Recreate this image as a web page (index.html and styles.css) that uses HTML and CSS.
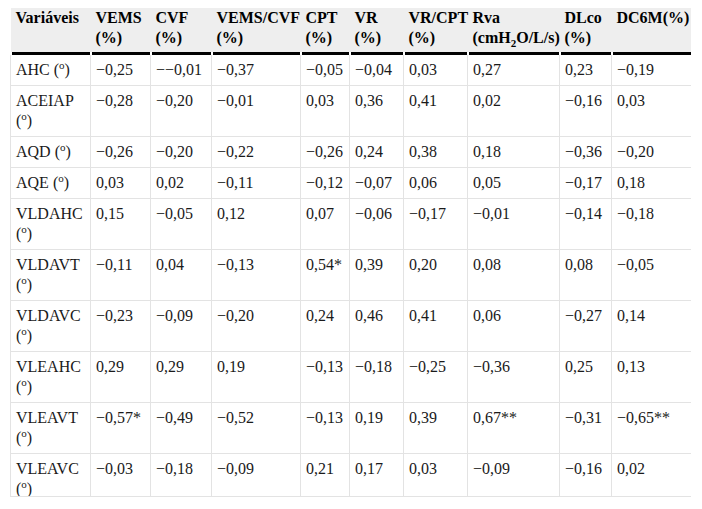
FILE: index.html
```html
<!DOCTYPE html>
<html lang="pt">
<head>
<meta charset="utf-8">
<title>Correlações</title>
<link rel="stylesheet" href="styles.css">
</head>
<body>
<div class="table-wrap">
<table class="data">
<colgroup>
<col class="c1"><col class="c2"><col class="c3"><col class="c4"><col class="c5">
<col class="c6"><col class="c7"><col class="c8"><col class="c9"><col class="c10">
</colgroup>
<thead>
<tr>
<th>Variáveis</th>
<th>VEMS (%)</th>
<th>CVF (%)</th>
<th>VEMS/CVF (%)</th>
<th>CPT (%)</th>
<th>VR (%)</th>
<th>VR/CPT (%)</th>
<th>Rva (cmH<sub>2</sub>O/L/s)</th>
<th>DLco (%)</th>
<th>DC6M(%)</th>
</tr>
</thead>
<tbody>
<tr><td>AHC (<sup>o</sup>)</td><td>−0,25</td><td>−−0,01</td><td>−0,37</td><td>−0,05</td><td>−0,04</td><td>0,03</td><td>0,27</td><td>0,23</td><td>−0,19</td></tr>
<tr><td>ACEIAP (<sup>o</sup>)</td><td>−0,28</td><td>−0,20</td><td>−0,01</td><td>0,03</td><td>0,36</td><td>0,41</td><td>0,02</td><td>−0,16</td><td>0,03</td></tr>
<tr><td>AQD (<sup>o</sup>)</td><td>−0,26</td><td>−0,20</td><td>−0,22</td><td>−0,26</td><td>0,24</td><td>0,38</td><td>0,18</td><td>−0,36</td><td>−0,20</td></tr>
<tr><td>AQE (<sup>o</sup>)</td><td>0,03</td><td>0,02</td><td>−0,11</td><td>−0,12</td><td>−0,07</td><td>0,06</td><td>0,05</td><td>−0,17</td><td>0,18</td></tr>
<tr><td>VLDAHC (<sup>o</sup>)</td><td>0,15</td><td>−0,05</td><td>0,12</td><td>0,07</td><td>−0,06</td><td>−0,17</td><td>−0,01</td><td>−0,14</td><td>−0,18</td></tr>
<tr><td>VLDAVT (<sup>o</sup>)</td><td>−0,11</td><td>0,04</td><td>−0,13</td><td>0,54*</td><td>0,39</td><td>0,20</td><td>0,08</td><td>0,08</td><td>−0,05</td></tr>
<tr><td>VLDAVC (<sup>o</sup>)</td><td>−0,23</td><td>−0,09</td><td>−0,20</td><td>0,24</td><td>0,46</td><td>0,41</td><td>0,06</td><td>−0,27</td><td>0,14</td></tr>
<tr><td>VLEAHC (<sup>o</sup>)</td><td>0,29</td><td>0,29</td><td>0,19</td><td>−0,13</td><td>−0,18</td><td>−0,25</td><td>−0,36</td><td>0,25</td><td>0,13</td></tr>
<tr><td>VLEAVT (<sup>o</sup>)</td><td>−0,57*</td><td>−0,49</td><td>−0,52</td><td>−0,13</td><td>0,19</td><td>0,39</td><td>0,67**</td><td>−0,31</td><td>−0,65**</td></tr>
<tr><td>VLEAVC (<sup>o</sup>)</td><td>−0,03</td><td>−0,18</td><td>−0,09</td><td>0,21</td><td>0,17</td><td>0,03</td><td>−0,09</td><td>−0,16</td><td>0,02</td></tr>
</tbody>
</table>
</div>
</body>
</html>
```

FILE: styles.css
```css
html, body {
  margin: 0;
  padding: 0;
  background: #ffffff;
}

body {
  padding: 8px 0 0 10px;
  font-family: "Liberation Serif", "Times New Roman", Times, "DejaVu Serif", serif;
  font-size: 16px;
  line-height: 20px;
  color: #1a1a1a;
}

.table-wrap {
  width: 681px;
  height: 488px;
  overflow: hidden;
  border-bottom: 1px solid #e3e3e3;
}

.data {
  width: 681px;
  table-layout: fixed;
  border-collapse: collapse;
  font-family: "Liberation Serif", "Times New Roman", Times, "DejaVu Serif", serif;
}

.c1 { width: 80px; }
.c2 { width: 60px; }
.c3 { width: 61px; }
.c4 { width: 89px; }
.c5 { width: 49px; }
.c6 { width: 54px; }
.c7 { width: 64px; }
.c8 { width: 92px; }
.c9 { width: 52px; }
.c10 { width: 80px; }

.data th {
  text-align: left;
  vertical-align: top;
  font-weight: bold;
  color: #000;
  padding: 0 5px 7px 5px;
  background:
    linear-gradient(#000, #000) left 1px bottom 0 / calc(100% - 2px) 3px no-repeat,
    linear-gradient(#fff, #fff) left bottom / 100% 3px no-repeat,
    #eeeeee;
}

.data td {
  text-align: left;
  vertical-align: top;
  padding: 5px 5px;
  border: 1px solid #e3e3e3;
  border-top: none;
}

.data sup {
  font-size: 11px;
  line-height: 0;
  vertical-align: 6px;
}

.data sub {
  font-size: 11px;
  line-height: 0;
  vertical-align: -4px;
}
```
